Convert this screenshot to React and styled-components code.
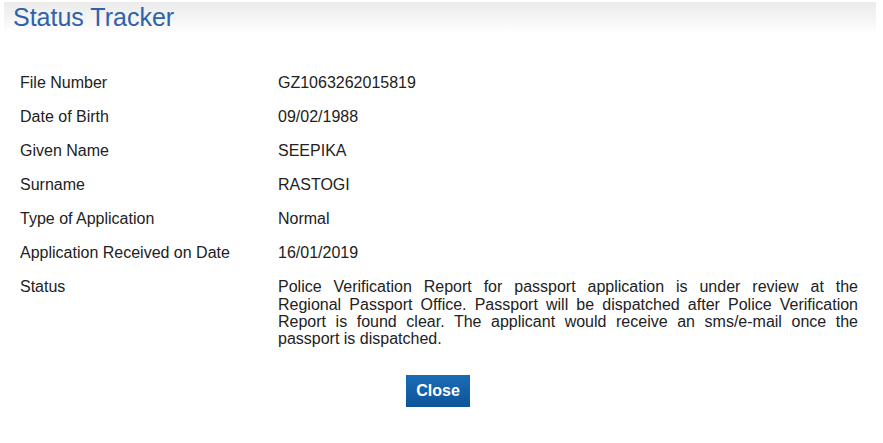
import React from "react";
import styled, { createGlobalStyle } from "styled-components";

const Global = createGlobalStyle`
  html, body { margin: 0; padding: 0; background: #ffffff; }
  body { font-family: "Liberation Sans", Arial, sans-serif; }
`;

const Page = styled.div`
  width: 876px;
  padding-top: 2px;
`;

const Header = styled.div`
  margin-left: 4px;
  height: 31px;
  display: flex;
  align-items: center;
  padding-left: 9px;
  background: linear-gradient(to bottom, #ebebeb 0%, #f4f4f4 50%, #ffffff 100%);
`;

const Title = styled.h1`
  margin: 0;
  font-family: "Liberation Sans", Arial, sans-serif;
  font-weight: normal;
  font-size: 25px;
  color: #2e62a9;
  line-height: 1;
`;

const Table = styled.div`
  margin-top: 33px;
  display: grid;
  grid-template-columns: 258px 580px;
  padding-left: 20px;
`;

const Cell = styled.div`
  font-size: 16px;
  line-height: 17.3px;
  color: #222222;
  padding: 8.35px 0;
`;

const StatusLine = styled.span`
  display: block;
  white-space: nowrap;
  text-align: ${(p) => (p.$last ? "left" : "justify")};
  text-align-last: ${(p) => (p.$last ? "left" : "justify")};
`;

const Actions = styled.div`
  display: flex;
  justify-content: center;
  margin-top: 19px;
`;

const Button = styled.button`
  width: 64px;
  height: 32px;
  border: none;
  padding: 0;
  background: linear-gradient(to bottom, #1a6cb6 0%, #0e5499 100%);
  color: #ffffff;
  font-family: "Liberation Sans", Arial, sans-serif;
  font-weight: bold;
  font-size: 16px;
  cursor: pointer;
`;

const rows = [
  ["File Number", "GZ1063262015819"],
  ["Date of Birth", "09/02/1988"],
  ["Given Name", "SEEPIKA"],
  ["Surname", "RASTOGI"],
  ["Type of Application", "Normal"],
  ["Application Received on Date", "16/01/2019"],
];

const statusLines = [
  "Police Verification Report for passport application is under review at the",
  "Regional Passport Office. Passport will be dispatched after Police Verification",
  "Report is found clear. The applicant would receive an sms/e-mail once the",
  "passport is dispatched.",
];

export default function App() {
  return (
    <Page>
      <Global />
      <Header>
        <Title>Status Tracker</Title>
      </Header>
      <Table>
        {rows.map(([k, v]) => (
          <React.Fragment key={k}>
            <Cell>{k}</Cell>
            <Cell>{v}</Cell>
          </React.Fragment>
        ))}
        <Cell>Status</Cell>
        <Cell>
          {statusLines.map((l, i) => (
            <StatusLine key={i} $last={i === statusLines.length - 1}>
              {l}
            </StatusLine>
          ))}
        </Cell>
      </Table>
      <Actions>
        <Button>Close</Button>
      </Actions>
    </Page>
  );
}
